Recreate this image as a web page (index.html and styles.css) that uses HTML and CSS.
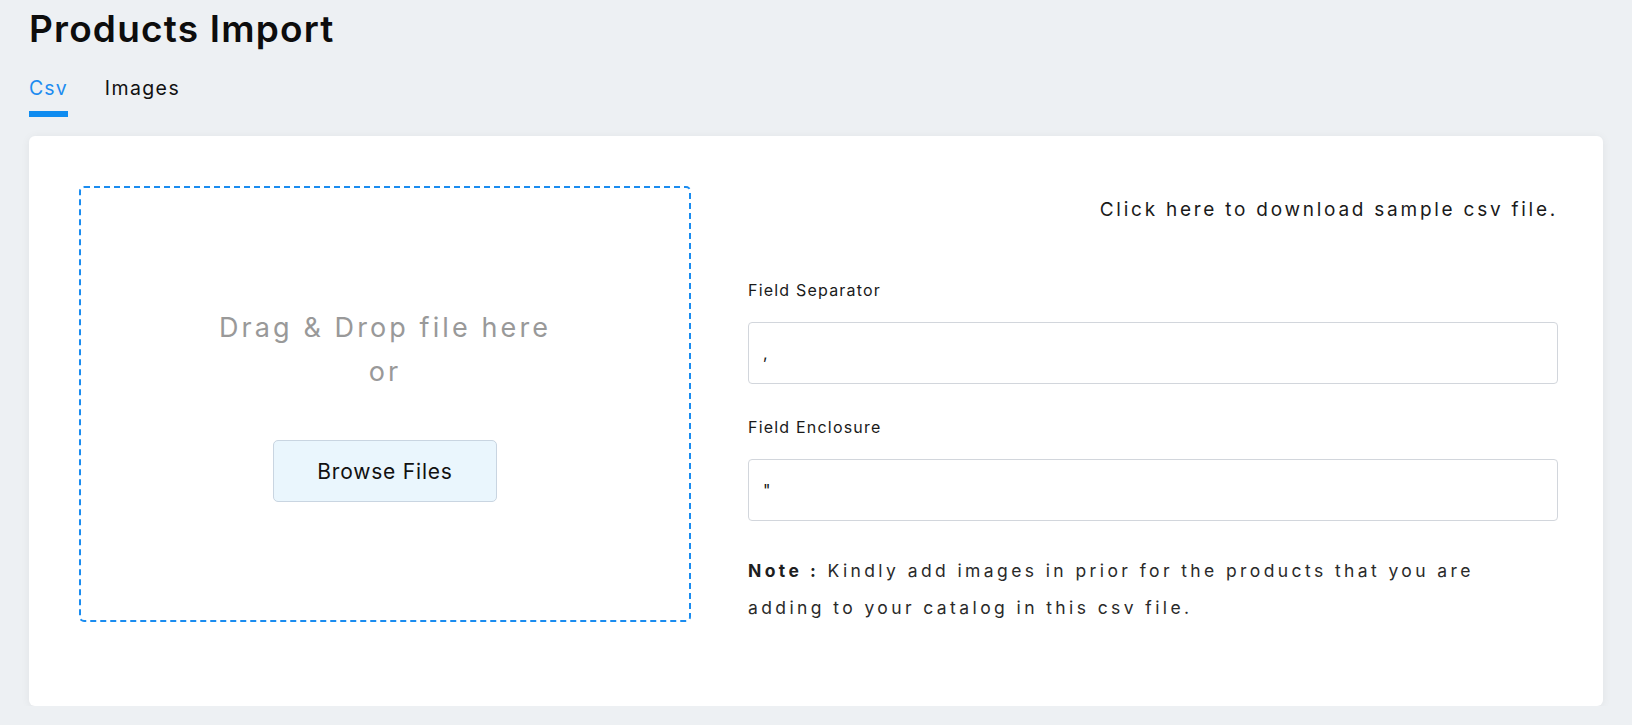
FILE: index.html
```html
<!DOCTYPE html>
<html lang="en">
<head>
<meta charset="utf-8">
<title>Products Import</title>
<link rel="stylesheet" href="styles.css">
</head>
<body>
<div class="page">
  <h1 class="title">Products Import</h1>
  <nav class="tabs">
    <a class="tab tab-active">Csv</a>
    <a class="tab">Images</a>
  </nav>
  <section class="card">
    <div class="dropzone">
      <p class="drop-text">Drag &amp; Drop file here<br>or</p>
      <button class="browse-btn" type="button">Browse Files</button>
    </div>
    <div class="settings">
      <a class="download">Click here to download sample csv file.</a>
      <label class="field-label">Field Separator</label>
      <input class="field-input" type="text" value=",">
      <label class="field-label field-label-second">Field Enclosure</label>
      <input class="field-input" type="text" value="&quot;">
      <p class="note"><strong>Note :</strong> Kindly add images in prior for the products that you are<br>adding to your catalog in this csv file.</p>
    </div>
  </section>
</div>
</body>
</html>
```

FILE: styles.css
```css
* { box-sizing: border-box; }

html, body {
  margin: 0;
  padding: 0;
  background: #edf0f3;
}

body {
  font-family: Inter, "Open Sans", sans-serif;
  color: #111;
}

.page {
  padding: 0 29px;
}

.title {
  margin: 10px 0 0;
  font-size: 37px;
  line-height: 38px;
  font-weight: 600;
  letter-spacing: 1.2px;
  color: #0d0d0d;
}

.tabs {
  display: flex;
  gap: 37px;
  margin-top: 30px;
}

.tab {
  display: block;
  font-size: 19.5px;
  line-height: 20px;
  padding-bottom: 13px;
  border-bottom: 6px solid transparent;
  color: #111;
  letter-spacing: 1.4px;
}

.tab-active {
  color: #1d8cf0;
  border-bottom-color: #0f8cf0;
  letter-spacing: 1.1px;
}

.card {
  margin-top: 19px;
  background: #fff;
  border-radius: 6px;
  box-shadow: 0 1px 10px rgba(0, 0, 0, 0.06);
  padding: 50px 45px 80px 50px;
  display: flex;
  align-items: flex-start;
  gap: 57px;
}

.dropzone {
  flex: 0 0 612px;
  height: 436px;
  border: 2px dashed #1a8cf0;
  border-radius: 5px;
  display: flex;
  flex-direction: column;
  align-items: center;
  justify-content: center;
}

.drop-text {
  margin: 0;
  text-align: center;
  font-size: 27px;
  line-height: 44px;
  letter-spacing: 3.1px;
  color: #999;
}

.browse-btn {
  margin-top: 46px;
  width: 224px;
  height: 62px;
  border: 1px solid #c9d5e1;
  border-radius: 5px;
  background: #eaf6fd;
  font-family: inherit;
  font-size: 21px;
  color: #111;
  letter-spacing: 0.8px;
}

.settings {
  flex: 1;
  display: flex;
  flex-direction: column;
}

.download {
  display: block;
  margin-top: 10px;
  text-align: right;
  font-size: 19px;
  line-height: 28px;
  letter-spacing: 2.75px;
  color: #1a1a1a;
}

.field-label {
  display: block;
  margin-top: 54px;
  font-size: 16px;
  line-height: 24px;
  letter-spacing: 1.2px;
  color: #1a1a1a;
}

.field-label-second {
  margin-top: 31px;
}

.field-input {
  margin-top: 20px;
  height: 62px;
  border: 1px solid #d2d6dc;
  border-radius: 4px;
  padding: 0 14px;
  font-family: inherit;
  font-size: 16px;
  color: #111;
  background: #fff;
}

.note {
  margin: 31px 0 0;
  font-size: 17.5px;
  line-height: 37px;
  letter-spacing: 3.4px;
  color: #2a2a2a;
}

.note strong {
  font-weight: 700;
  color: #1e1e1e;
}
```
